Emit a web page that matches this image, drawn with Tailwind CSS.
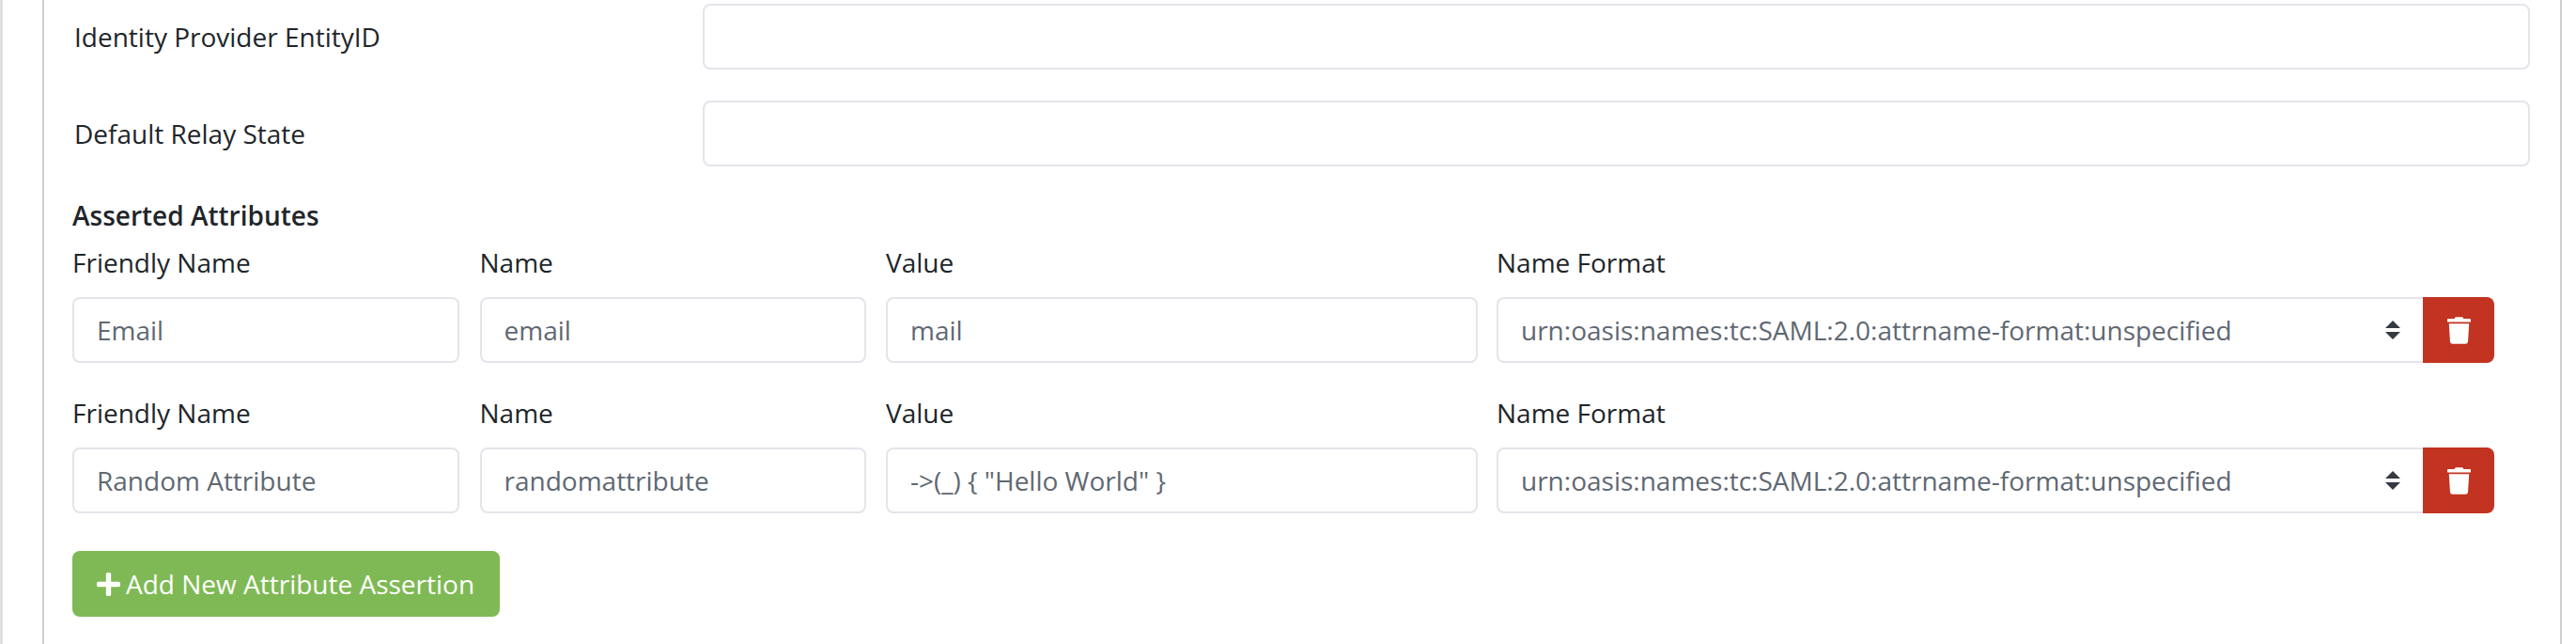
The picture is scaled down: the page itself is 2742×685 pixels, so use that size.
<!DOCTYPE html>
<html>
<head>
<meta charset="utf-8">
<script src="https://cdn.jsdelivr.net/npm/@tailwindcss/browser@4"></script>
</head>
<body class="bg-white">
<div class="h-[685px] w-[2742px] overflow-hidden font-['Open_Sans',sans-serif] text-[28px] text-[#212529]">
  <div class="h-full border-l-[3px] border-[#dee0e3] pl-[42px]">
    <div class="h-full w-[2682px] border-x-2 border-[#ccd0d4] pl-[30px] pt-1">
      <div class="flex h-[70px] items-center">
        <label class="w-[671px] pl-[2px]">Identity Provider EntityID</label>
        <input type="text" class="h-[70px] w-[1945px] rounded-lg border-2 border-[#e4e4ea] bg-white px-[24px] text-[#5f6872]">
      </div>
      <div class="mt-[33px] flex h-[70px] items-center">
        <label class="w-[671px] pl-[2px]">Default Relay State</label>
        <input type="text" class="h-[70px] w-[1945px] rounded-lg border-2 border-[#e4e4ea] bg-white px-[24px] text-[#5f6872]">
      </div>
      <div class="mt-[34px] h-[36px] leading-[36px] font-semibold">Asserted Attributes</div>

      <div class="mt-[14px] flex">
        <div class="w-[411.5px]">
          <div class="h-[36px] leading-[36px]">Friendly Name</div>
          <input type="text" value="Email" class="mt-[19px] h-[70px] w-full rounded-lg border-2 border-[#e4e4ea] bg-white px-[24px] text-[#5f6872]">
        </div>
        <div class="ml-[22px] w-[411.5px]">
          <div class="h-[36px] leading-[36px]">Name</div>
          <input type="text" value="email" class="mt-[19px] h-[70px] w-full rounded-lg border-2 border-[#e4e4ea] bg-white px-[24px] text-[#5f6872]">
        </div>
        <div class="ml-[21px] w-[630px]">
          <div class="h-[36px] leading-[36px]">Value</div>
          <input type="text" value="mail" class="mt-[19px] h-[70px] w-full rounded-lg border-2 border-[#e4e4ea] bg-white px-[24px] text-[#5f6872]">
        </div>
        <div class="ml-[20px] w-[1062px]">
          <div class="h-[36px] leading-[36px]">Name Format</div>
          <div class="mt-[19px] flex h-[70px]">
            <div class="relative w-[986px]">
              <select class="h-[70px] w-full appearance-none rounded-l-lg border-2 border-r-0 border-[#e4e4ea] bg-white px-[24px] text-[#5f6872]">
                <option>urn:oasis:names:tc:SAML:2.0:attrname-format:unspecified</option>
              </select>
              <svg class="pointer-events-none absolute left-[946px] top-[25px] h-[20px] w-[16px]" viewBox="0 0 16 20"><path fill="#343a40" d="M8 0l8 8H0zM8 20l-8-8h16z"/></svg>
            </div>
            <button class="flex w-[76px] items-center justify-center rounded-r-lg bg-[#c23321]">
              <svg class="h-[29px] w-[25px]" viewBox="0 0 448 512"><path fill="#fff" d="M432 32H312l-9.4-18.7A24 24 0 0 0 281.1 0H166.8a23.72 23.72 0 0 0-21.4 13.3L136 32H16A16 16 0 0 0 0 48v32a16 16 0 0 0 16 16h416a16 16 0 0 0 16-16V48a16 16 0 0 0-16-16zM53.2 467a48 48 0 0 0 47.9 45h245.8a48 48 0 0 0 47.9-45L416 128H32z"/></svg>
            </button>
          </div>
        </div>
      </div>

      <div class="mt-[35px] flex">
        <div class="w-[411.5px]">
          <div class="h-[36px] leading-[36px]">Friendly Name</div>
          <input type="text" value="Random Attribute" class="mt-[19px] h-[70px] w-full rounded-lg border-2 border-[#e4e4ea] bg-white px-[24px] text-[#5f6872]">
        </div>
        <div class="ml-[22px] w-[411.5px]">
          <div class="h-[36px] leading-[36px]">Name</div>
          <input type="text" value="randomattribute" class="mt-[19px] h-[70px] w-full rounded-lg border-2 border-[#e4e4ea] bg-white px-[24px] text-[#5f6872]">
        </div>
        <div class="ml-[21px] w-[630px]">
          <div class="h-[36px] leading-[36px]">Value</div>
          <input type="text" value='-&gt;(_) { "Hello World" }' class="mt-[19px] h-[70px] w-full rounded-lg border-2 border-[#e4e4ea] bg-white px-[24px] text-[#5f6872]">
        </div>
        <div class="ml-[20px] w-[1062px]">
          <div class="h-[36px] leading-[36px]">Name Format</div>
          <div class="mt-[19px] flex h-[70px]">
            <div class="relative w-[986px]">
              <select class="h-[70px] w-full appearance-none rounded-l-lg border-2 border-r-0 border-[#e4e4ea] bg-white px-[24px] text-[#5f6872]">
                <option>urn:oasis:names:tc:SAML:2.0:attrname-format:unspecified</option>
              </select>
              <svg class="pointer-events-none absolute left-[946px] top-[25px] h-[20px] w-[16px]" viewBox="0 0 16 20"><path fill="#343a40" d="M8 0l8 8H0zM8 20l-8-8h16z"/></svg>
            </div>
            <button class="flex w-[76px] items-center justify-center rounded-r-lg bg-[#c23321]">
              <svg class="h-[29px] w-[25px]" viewBox="0 0 448 512"><path fill="#fff" d="M432 32H312l-9.4-18.7A24 24 0 0 0 281.1 0H166.8a23.72 23.72 0 0 0-21.4 13.3L136 32H16A16 16 0 0 0 0 48v32a16 16 0 0 0 16 16h416a16 16 0 0 0 16-16V48a16 16 0 0 0-16-16zM53.2 467a48 48 0 0 0 47.9 45h245.8a48 48 0 0 0 47.9-45L416 128H32z"/></svg>
            </button>
          </div>
        </div>
      </div>

      <button class="mt-[40px] flex h-[70px] w-[455px] items-center rounded-lg bg-[#7fb955] pl-[26px] text-white">
        <svg class="mr-[6px] h-[29px] w-[25px]" viewBox="0 0 448 512"><path fill="#fff" d="M416 208H272V64c0-17.67-14.33-32-32-32h-32c-17.67 0-32 14.33-32 32v144H32c-17.67 0-32 14.33-32 32v32c0 17.67 14.33 32 32 32h144v144c0 17.67 14.33 32 32 32h32c17.67 0 32-14.33 32-32V304h144c17.67 0 32-14.33 32-32v-32c0-17.67-14.33-32-32-32z"/></svg>
        Add New Attribute Assertion
      </button>
    </div>
  </div>
</div>
</body>
</html>
